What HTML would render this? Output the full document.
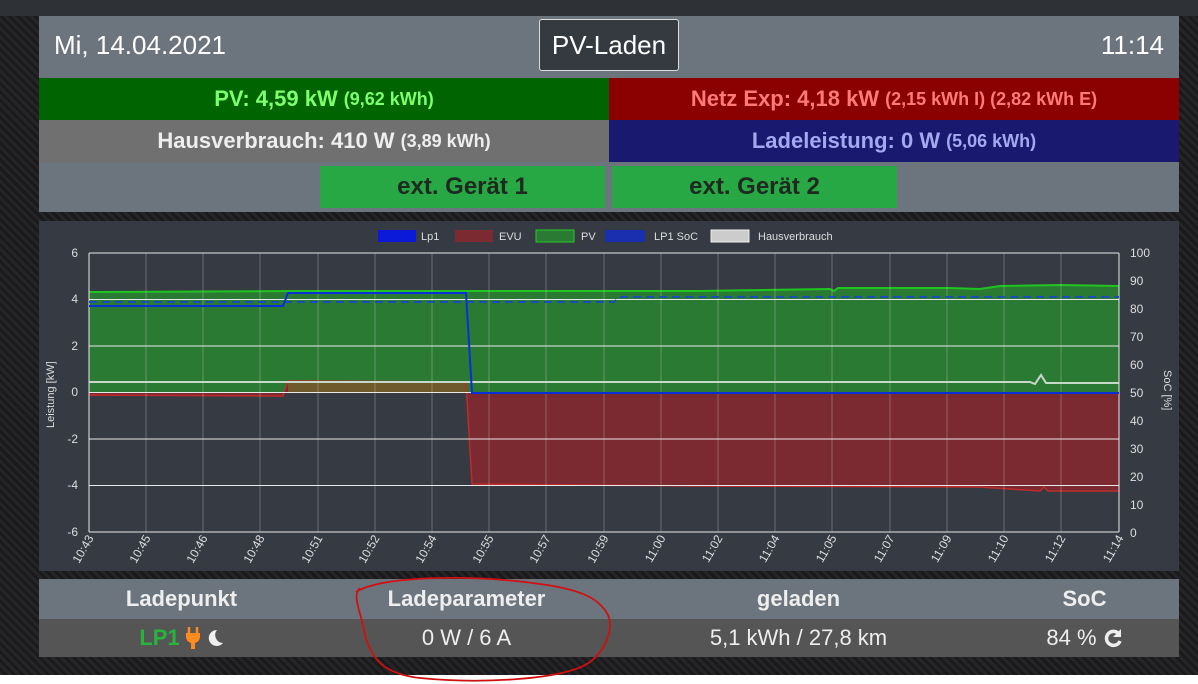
<!DOCTYPE html>
<html><head><meta charset="utf-8"><style>
*{margin:0;padding:0;box-sizing:border-box}
body{width:1198px;height:684px;overflow:hidden;background:#fff;font-family:"Liberation Sans",sans-serif;position:relative}
.bg{position:absolute;left:0;top:0;width:1198px;height:675px;background:#1f1f21;background-image:repeating-linear-gradient(45deg,#252527 0 3px,#1a1a1c 3px 6px)}
.strip{position:absolute;left:0;top:0;width:1198px;height:16px;background:#2e3136}
.abs{position:absolute}
.c{display:flex;align-items:center;justify-content:center;font-weight:bold}
.s{font-size:18px;margin-left:6px}
</style></head><body>
<div class="bg"></div><div class="strip"></div>
<div class="abs" style="left:39px;top:16px;width:1140px;height:196px;background:#6c757d"></div>
<div class="abs" style="left:54px;top:30px;font-size:26px;color:#fff">Mi, 14.04.2021</div>
<div class="abs c" style="left:539px;top:19px;width:140px;height:52px;background:#343a40;border:1px solid #ddd;border-radius:3px;color:#fff;font-size:26px;font-weight:normal">PV-Laden</div>
<div class="abs" style="right:34px;top:30px;font-size:26px;color:#fff">11:14</div>
<div class="abs c" style="left:39px;top:78px;width:570px;height:42px;background:#006400;color:#7dff6e;font-size:22px">PV: 4,59 kW<span class="s">(9,62 kWh)</span></div>
<div class="abs c" style="left:609px;top:78px;width:570px;height:42px;background:#8b0000;color:#ff7a7a;font-size:22px">Netz Exp: 4,18 kW<span class="s">(2,15 kWh I) (2,82 kWh E)</span></div>
<div class="abs c" style="left:39px;top:120px;width:570px;height:42px;background:#707070;color:#eee;font-size:22px">Hausverbrauch: 410 W<span class="s">(3,89 kWh)</span></div>
<div class="abs c" style="left:609px;top:120px;width:570px;height:42px;background:#191970;color:#a3a8f0;font-size:22px">Ladeleistung: 0 W<span class="s">(5,06 kWh)</span></div>
<div class="abs c" style="left:320px;top:166px;width:285px;height:42px;background:#28a745;color:#1d2a20;font-size:24px">ext. Gerät 1</div>
<div class="abs c" style="left:612px;top:166px;width:285px;height:42px;background:#28a745;color:#1d2a20;font-size:24px">ext. Gerät 2</div>

<svg class="abs" style="left:39px;top:221px" width="1140" height="350" viewBox="39 221 1140 350" font-family="Liberation Sans,sans-serif">
<rect x="39" y="221" width="1140" height="350" fill="#363a42"/>
<g font-size="11" fill="#ddd">
<rect x="378" y="230" width="38" height="12" fill="#0b1ad8"/><text x="421" y="240">Lp1</text>
<rect x="455" y="230" width="38" height="12" fill="#7a2a30"/><text x="499" y="240">EVU</text>
<rect x="536" y="230" width="38" height="12" fill="#2b7a34" stroke="#22cc22"/><text x="581" y="240">PV</text>
<rect x="605" y="230" width="40" height="12" fill="#1a2fb0"/><text x="654" y="240">LP1 SoC</text>
<rect x="711" y="230" width="38" height="12" fill="#ccc" stroke="#eee"/><text x="758" y="240">Hausverbrauch</text>
</g>
<!-- PV fill -->
<path d="M89 292 L300 291 L500 291 L700 291 L830 289 L834 291 L838 288 L950 288 L980 289 L1000 286 L1060 285 L1119 286 L1119 392 L89 392Z" fill="#2b7a34"/>
<path d="M89 292 L300 291 L500 291 L700 291 L830 289 L834 291 L838 288 L950 288 L980 289 L1000 286 L1060 285 L1119 286" fill="none" stroke="#20c420" stroke-width="2"/>
<!-- EVU -->
<path d="M89 392 L89 396 L283 396 L288 381 L466 382 L472 484 L700 486 L980 487 L1040 491 L1044 487 L1048 491 L1119 491 L1119 392 Z" fill="#7a2a30"/>
<path d="M288 392 L288 381 L466 382 L466 392Z" fill="#6e5a2a"/>
<path d="M89 395 L283 396 L288 381 L466 382 L472 484 L700 486 L980 487 L1040 491 L1044 487 L1048 491 L1119 491" fill="none" stroke="#c02a2a" stroke-width="1.5"/>
<g stroke="#ccc" stroke-opacity="0.35" stroke-width="1">
<path d="M146 253V532M203 253V532M260 253V532M318 253V532M375 253V532M432 253V532M489 253V532M546 253V532M604 253V532M661 253V532M718 253V532M775 253V532M832 253V532M890 253V532M947 253V532M1004 253V532M1061 253V532"/>
</g>
<g stroke="#e8e8e8" stroke-width="1"><path d="M89 253H1119M89 299.5H1119M89 346H1119M89 392.5H1119M89 439H1119M89 485.5H1119M89 532H1119M89 253V532M1119 253V532"/></g>
<path d="M89 382 L300 382 L500 382 L700 382 L1030 382 L1035 384 L1041 375 L1046 383 L1119 383" fill="none" stroke="#c8d8c8" stroke-width="2"/>
<path d="M89 302 L614 302 L620 297 L1119 297" fill="none" stroke="#1a4fb8" stroke-width="2" stroke-dasharray="8,5"/>
<path d="M89 306 L283 306 L288 293 L466 293 L472 393 L1119 393" fill="none" stroke="#0b2fd8" stroke-width="2"/>
<g font-size="12" fill="#ddd" text-anchor="end">
<text x="78" y="257">6</text><text x="78" y="303">4</text><text x="78" y="350">2</text><text x="78" y="396">0</text><text x="78" y="443">-2</text><text x="78" y="489">-4</text><text x="78" y="536">-6</text>
</g>
<g font-size="12" fill="#ddd">
<text x="1130" y="257">100</text><text x="1130" y="285">90</text><text x="1130" y="313">80</text><text x="1130" y="341">70</text><text x="1130" y="369">60</text><text x="1130" y="397">50</text><text x="1130" y="425">40</text><text x="1130" y="453">30</text><text x="1130" y="481">20</text><text x="1130" y="509">10</text><text x="1130" y="537">0</text>
</g>
<text transform="translate(54 428) rotate(-90)" font-size="11" fill="#ddd">Leistung [kW]</text>
<text transform="translate(1164 370) rotate(90)" font-size="11" fill="#ddd">SoC [%]</text>
<g font-size="12" fill="#ddd" text-anchor="end">
<text transform="translate(94 538) rotate(-60)">10:43</text>
<text transform="translate(151 538) rotate(-60)">10:45</text>
<text transform="translate(208 538) rotate(-60)">10:46</text>
<text transform="translate(265 538) rotate(-60)">10:48</text>
<text transform="translate(323 538) rotate(-60)">10:51</text>
<text transform="translate(380 538) rotate(-60)">10:52</text>
<text transform="translate(437 538) rotate(-60)">10:54</text>
<text transform="translate(494 538) rotate(-60)">10:55</text>
<text transform="translate(551 538) rotate(-60)">10:57</text>
<text transform="translate(609 538) rotate(-60)">10:59</text>
<text transform="translate(666 538) rotate(-60)">11:00</text>
<text transform="translate(723 538) rotate(-60)">11:02</text>
<text transform="translate(780 538) rotate(-60)">11:04</text>
<text transform="translate(837 538) rotate(-60)">11:05</text>
<text transform="translate(895 538) rotate(-60)">11:07</text>
<text transform="translate(952 538) rotate(-60)">11:09</text>
<text transform="translate(1009 538) rotate(-60)">11:10</text>
<text transform="translate(1066 538) rotate(-60)">11:12</text>
<text transform="translate(1124 538) rotate(-60)">11:14</text>
</g>
</svg>

<div class="abs" style="left:39px;top:579px;width:1140px;height:40px;background:#6c757d"></div>
<div class="abs" style="left:39px;top:619px;width:1140px;height:38px;background:#555"></div>
<div class="abs c" style="left:39px;top:579px;width:285px;height:40px;color:#eee;font-size:22px">Ladepunkt</div>
<div class="abs c" style="left:324px;top:579px;width:285px;height:40px;color:#eee;font-size:22px">Ladeparameter</div>
<div class="abs c" style="left:656px;top:579px;width:285px;height:40px;color:#eee;font-size:22px">geladen</div>
<div class="abs c" style="left:942px;top:579px;width:285px;height:40px;color:#eee;font-size:22px">SoC</div>
<div class="abs c" style="left:39px;top:619px;width:285px;height:38px;font-size:22px"><span style="color:#28b43c">LP1</span>
<svg width="16" height="22" viewBox="0 0 16 22" style="margin-left:5px"><path d="M4 0v6M12 0v6" stroke="#ff8a1e" stroke-width="2.5"/><path d="M1 6h14v4a7 7 0 0 1-5 6v6h-4v-6a7 7 0 0 1-5-6z" fill="#ff8a1e"/></svg>
<svg width="20" height="20" viewBox="0 0 20 20" style="margin-left:3px"><path d="M13 2a8 8 0 1 0 6 13a8 8 0 0 1-6-13z" fill="#eee"/></svg></div>
<div class="abs c" style="left:324px;top:619px;width:285px;height:38px;color:#eee;font-size:22px;font-weight:normal">0 W / 6 A</div>
<div class="abs c" style="left:656px;top:619px;width:285px;height:38px;color:#eee;font-size:22px;font-weight:normal">5,1 kWh / 27,8 km</div>
<div class="abs c" style="left:942px;top:619px;width:285px;height:38px;color:#eee;font-size:22px;font-weight:normal">84 %
<svg width="20" height="20" viewBox="0 0 20 20" style="margin-left:6px"><path d="M16 6A7 7 0 1 0 17 13" fill="none" stroke="#eee" stroke-width="3.5"/><path d="M18 1v8h-8z" fill="#eee"/></svg></div>

<svg class="abs" style="left:0;top:0" width="1198" height="684"><path d="M356 592 C380 576 470 574 540 584 C585 590 600 600 608 615 C614 630 605 650 590 662 C565 680 480 684 420 678 C385 674 370 660 364 630 C360 610 352 595 360 588" fill="none" stroke="#d01010" stroke-width="1.8"/></svg>
</body></html>
